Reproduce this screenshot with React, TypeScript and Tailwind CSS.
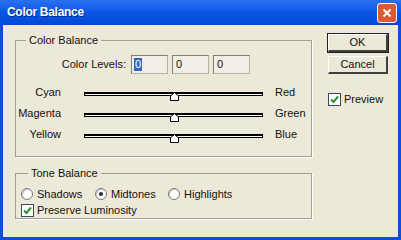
import React from "react";

const font = "font-['Liberation_Sans',Arial,sans-serif]";

function Thumb() {
  return (
    <svg width="9" height="9" viewBox="0 0 9 9" className="absolute left-[85px] top-[-2px]">
      <path d="M0.5 8.5 V4 L4.5 0.5 L8.5 4 V8.5 Z" fill="#ffffff" stroke="#000000" strokeWidth="1" />
    </svg>
  );
}

function SliderRow({ left, right }: { left: string; right: string }) {
  return (
    <div className="flex items-center h-[21px]">
      <div className="w-[45px] text-right">{left}</div>
      <div className="relative ml-[23px] w-[179px] h-[4px] border-t-2 border-l border-b border-r border-black bg-white mt-[3px]">
        <Thumb />
      </div>
      <div className="ml-[12px]">{right}</div>
    </div>
  );
}

function Radio({ label, checked }: { label: string; checked?: boolean }) {
  return (
    <div className="flex items-center">
      <div className="w-[12px] h-[12px] rounded-full border border-[#7a7a7a] bg-white flex items-center justify-center shadow-[inset_1px_1px_1px_#c8c8c8]">
        {checked && <div className="w-[4px] h-[4px] rounded-full bg-[#2a2a2a]" />}
      </div>
      <span className="ml-[4px]">{label}</span>
    </div>
  );
}

function Check({ label }: { label: string }) {
  return (
    <div className="flex items-center">
      <div className="w-[13px] h-[13px] border border-[#3b4a5a] bg-white flex items-center justify-center">
        <svg width="9" height="9" viewBox="0 0 9 9">
          <path d="M1 4.5 L3.5 7 L8 1.5" fill="none" stroke="#2f8f2f" strokeWidth="2" />
        </svg>
      </div>
      <span className="ml-[3px]">{label}</span>
    </div>
  );
}

function Field({ value, selected }: { value: string; selected?: boolean }) {
  return (
    <div className="w-[37px] h-[19px] border border-[#b4b2a8] border-t-[#7f7f78] border-l-[#7f7f78] bg-[#f0eee6] flex items-center pl-[2px]">
      {selected ? <span className="bg-[#316ac5] text-white px-[1px] leading-[13px]">{value}</span> : <span className="pl-[1px]">{value}</span>}
    </div>
  );
}

function Button({ label, def }: { label: string; def?: boolean }) {
  return (
    <div
      className={
        "w-[60px] h-[18px] flex items-center justify-center bg-[#ece9d8] border-t border-l border-white border-r-2 border-b-2 border-r-[#404040] border-b-[#404040] " +
        (def ? "outline outline-1 outline-[#202020]" : "")
      }
    >
      {label}
    </div>
  );
}

export default function App() {
  return (
    <div className={`w-[401px] h-[240px] flex flex-col bg-[#0b4fd6] text-[11px] leading-[13px] text-[#111111] ${font}`}>
      <div className="h-[25px] flex items-center justify-between pl-[7px] pr-[4px] bg-linear-to-b from-[#2b70f2] via-[#0656e4] to-[#0349d6]">
        <span className="text-white font-bold text-[12px] tracking-[-0.3px] [text-shadow:1px_1px_0_#0a2a8a]">Color Balance</span>
        <div className="w-[20px] h-[20px] rounded-[3px] border border-white bg-[#dd5a37] flex items-center justify-center">
          <svg width="10" height="10" viewBox="0 0 10 10">
            <path d="M1.5 1.5 L8.5 8.5 M8.5 1.5 L1.5 8.5" stroke="#ffffff" strokeWidth="2" />
          </svg>
        </div>
      </div>
      <div className="flex-1 mx-[3px] mb-[3px] bg-[#ece9d8] flex pt-[9px] pl-[12px]">
        <div className="w-[297px]">
          <fieldset className="border border-[#a0a096] shadow-[1px_1px_0_#ffffff] pb-[11px]">
            <legend className="ml-[10px] px-[3px]">Color Balance</legend>
            <div className="pt-[8px]">
              <div className="flex items-center">
                <div className="w-[110px] text-right">Color Levels:</div>
                <div className="flex gap-[4px] ml-[5px]">
                  <Field value="0" selected />
                  <Field value="0" />
                  <Field value="0" />
                </div>
              </div>
              <div className="mt-[8px]">
                <SliderRow left="Cyan" right="Red" />
                <SliderRow left="Magenta" right="Green" />
                <SliderRow left="Yellow" right="Blue" />
              </div>
            </div>
          </fieldset>
          <fieldset className="mt-[10px] border border-[#a0a096] shadow-[1px_1px_0_#ffffff] pb-[1px]">
            <legend className="ml-[12px] px-[3px]">Tone Balance</legend>
            <div className="pt-[7px] pl-[5px]">
              <div className="flex items-center h-[14px]">
                <div className="w-[74px]"><Radio label="Shadows" /></div>
                <div className="w-[73px]"><Radio label="Midtones" checked /></div>
                <Radio label="Highlights" />
              </div>
              <div className="mt-[3px]">
                <Check label="Preserve Luminosity" />
              </div>
            </div>
          </fieldset>
        </div>
        <div className="ml-[16px] flex flex-col">
          <Button label="OK" def />
          <div className="mt-[4px]">
            <Button label="Cancel" />
          </div>
          <div className="mt-[19px]">
            <Check label="Preview" />
          </div>
        </div>
      </div>
    </div>
  );
}
